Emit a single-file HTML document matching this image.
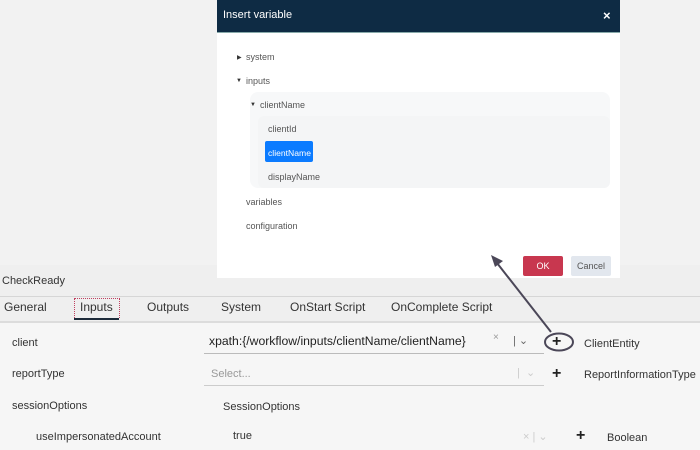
<!DOCTYPE html>
<html><head><style>
body{margin:0;width:700px;height:448px;overflow:hidden;background:#f2f2f2;font-family:"Liberation Sans",sans-serif;position:relative;font-size:11px;color:#333}
.a{position:absolute;white-space:nowrap}
.t{font-size:12px;top:300px}
</style></head><body>
<div class="a" style="left:0;top:265px;width:700px;height:183px;background:#efefef"></div>
<div class="a" style="left:0;top:296px;width:700px;height:1px;background:#d6d6d6"></div>
<div class="a" style="left:0;top:321px;width:700px;height:127px;background:#f6f6f6;border-top:2px solid #dcdcdc"></div>
<div class="a" style="left:2px;top:275px;font-size:11px">CheckReady</div>
<div class="a t" style="left:4px">General</div>
<div class="a" style="left:74px;top:298px;width:44px;height:19px;border:1px dotted #c04060;border-bottom:none"></div>
<div class="a" style="left:74px;top:318px;width:45px;height:2px;background:#1d2b3a"></div>
<div class="a t" style="left:80px">Inputs</div>
<div class="a t" style="left:147px">Outputs</div>
<div class="a t" style="left:221px">System</div>
<div class="a t" style="left:290px">OnStart Script</div>
<div class="a t" style="left:391px">OnComplete Script</div>

<div class="a" style="left:12px;top:337px">client</div>
<div class="a" style="left:209px;top:334px;font-size:12.2px;color:#222">xpath:{/workflow/inputs/clientName/clientName}</div>
<div class="a" style="left:493px;top:332px;color:#999;font-size:10px">×</div>
<div class="a" style="left:513px;top:334px;color:#666">| ⌄</div>
<div class="a" style="left:204px;top:353px;width:340px;height:1px;background:#bbb"></div>
<div class="a" style="left:552px;top:333px;font-size:16px;font-weight:bold;color:#222">+</div>
<div class="a" style="left:584px;top:338px">ClientEntity</div>

<div class="a" style="left:12px;top:368px">reportType</div>
<div class="a" style="left:211px;top:368px;color:#999">Select...</div>
<div class="a" style="left:517px;top:366px;color:#ccc">|&nbsp; ⌄</div>
<div class="a" style="left:204px;top:385px;width:340px;height:1px;background:#ccc"></div>
<div class="a" style="left:552px;top:365px;font-size:16px;font-weight:bold;color:#222">+</div>
<div class="a" style="left:584px;top:369px">ReportInformationType</div>

<div class="a" style="left:12px;top:400px">sessionOptions</div>
<div class="a" style="left:223px;top:401px">SessionOptions</div>
<div class="a" style="left:36px;top:431px">useImpersonatedAccount</div>
<div class="a" style="left:233px;top:430px">true</div>
<div class="a" style="left:523px;top:430px;color:#ccc">× | ⌄</div>
<div class="a" style="left:576px;top:427px;font-size:16px;font-weight:bold;color:#222">+</div>
<div class="a" style="left:607px;top:432px">Boolean</div>

<div class="a" style="left:217px;top:0;width:403px;height:278px;background:#fff"></div>
<div class="a" style="left:217px;top:0;width:403px;height:32px;background:#0e2b44;border-bottom:1px solid #8aa"></div>
<div class="a" style="left:223px;top:9px;color:#fff;font-size:11px">Insert variable</div>
<div class="a" style="left:603px;top:8px;color:#fff;font-size:13px;font-weight:bold">×</div>
<div class="a" style="left:250px;top:92px;width:360px;height:96px;background:#f7f8f9;border-radius:8px"></div>
<div class="a" style="left:258px;top:116px;width:352px;height:72px;background:#f4f5f6;border-radius:6px"></div>
<div class="a" style="left:237px;top:54px;font-size:6px;color:#333">▶</div>
<div class="a" style="left:246px;top:52px;font-size:9px;color:#555">system</div>
<div class="a" style="left:236px;top:78px;font-size:6px;color:#333">▼</div>
<div class="a" style="left:246px;top:76px;font-size:9px;color:#555">inputs</div>
<div class="a" style="left:250px;top:102px;font-size:6px;color:#333">▼</div>
<div class="a" style="left:260px;top:100px;font-size:9px;color:#555">clientName</div>
<div class="a" style="left:268px;top:124px;font-size:9px;color:#555">clientId</div>
<div class="a" style="left:265px;top:141px;width:48px;height:21px;background:#0b7bff;border-radius:2px"></div>
<div class="a" style="left:268px;top:148px;font-size:8.6px;color:#fff">clientName</div>
<div class="a" style="left:268px;top:172px;font-size:9px;color:#555">displayName</div>
<div class="a" style="left:246px;top:197px;font-size:9px;color:#555">variables</div>
<div class="a" style="left:246px;top:221px;font-size:9px;color:#555">configuration</div>
<div class="a" style="left:523px;top:256px;width:40px;height:20px;background:#c8374f;border-radius:2px;color:#fff;font-size:9px;text-align:center;line-height:20px">OK</div>
<div class="a" style="left:571px;top:256px;width:40px;height:20px;background:#e2e7ee;border-radius:2px;color:#555;font-size:9px;text-align:center;line-height:20px">Cancel</div>

<svg class="a" style="left:0;top:0" width="700" height="448">
<line x1="551" y1="332" x2="497" y2="263" stroke="#4b4758" stroke-width="2"/>
<polygon points="491,255 503,261 495,267" fill="#4b4758"/>
<ellipse cx="559" cy="342" rx="14" ry="8.5" fill="none" stroke="#4b4758" stroke-width="2"/>
</svg>
</body></html>
